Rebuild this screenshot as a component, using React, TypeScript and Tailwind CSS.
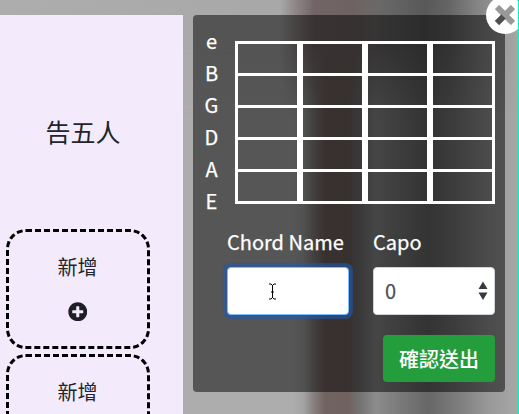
import { FaPlusCircle } from "react-icons/fa";

const STRINGS = ["e", "B", "G", "D", "A", "E"];
const FRETS = Array.from({ length: 20 }, (_, i) => i);

function AddCard() {
  return (
    <div className="flex h-[120px] w-36 shrink-0 flex-col items-center rounded-[20px] border-3 border-dashed border-black pt-5 pr-px">
      <span className="text-[20px] leading-[30px]">新增</span>
      <FaPlusCircle className="mt-[19.5px] size-[19.5px] text-[#1f1d26]" />
    </div>
  );
}

function Backdrop() {
  return (
    <div className="absolute inset-0 bg-[linear-gradient(to_right,#adadad_0,#adadad_292px,#a4a4a4_303px,#857f7e_314px,#71635f_325px,#6f625f_348px,#747373_360px,#8c8c8c_376px,#7a7a7a_400px,#676767_428px,#7c7c7c_457px,#999999_490px,#a8a8a8_519px)]">
      <div className="h-[115px] bg-[linear-gradient(to_right,#adadad_0,#a8a8a8_280px,#8a8282_298px,#736567_314px,#6e6262_350px,#6c6868_375px,#646464_395px,#585858_425px,#666666_450px,#828282_475px,#989898_500px,#a8a8a8_519px)] [mask-image:linear-gradient(black_40%,transparent)]" />
    </div>
  );
}

export default function App() {
  return (
    <div className="relative h-[414px] w-[519px] overflow-hidden font-['Noto_Sans_CJK_TC',sans-serif] text-[#212529]">
      <Backdrop />
      <div className="relative flex h-full items-start gap-2.5 pt-[15px]">
        <aside className="flex h-[399px] w-[183px] shrink-0 flex-col gap-[5px] overflow-hidden bg-[#f3ebfc] pl-1.5">
          <h2 className="h-[209px] shrink-0 pt-[97px] pl-[39.5px] text-[25px] leading-[38px]">告五人</h2>
          <AddCard />
          <AddCard />
        </aside>
        <section className="relative h-[377px] w-[312px] shrink-0 rounded bg-black/50 text-[20px] text-white">
          <button className="absolute -top-[19px] left-[293px] flex size-[38px] items-center justify-center rounded-full bg-white">
            <svg viewBox="0 0 20 20" className="size-5">
              <path d="M2 2 18 18M18 2 2 18" stroke="#999" strokeWidth="6" />
              <path d="M8.5 11.5 2 18" stroke="#505050" strokeWidth="6" />
            </svg>
          </button>
          <div className="flex pt-[11px]">
            <div className="-mt-px flex w-[42px] flex-col pl-[1px] text-center [-webkit-text-stroke:0.25px_white]">
              {STRINGS.map((name) => (
                <span key={name} className="h-8 pr-1.5 leading-8">{name}</span>
              ))}
            </div>
            <div className="mt-[15px] grid h-[163px] w-[260px] grid-cols-4 grid-rows-[repeat(5,32px)] border-b-3 border-white">
              {FRETS.map((i) => (
                <div key={i} className="border-x-3 border-t-3 border-white" />
              ))}
            </div>
          </div>
          <div className="mt-2.5 flex gap-6 pl-[34px]">
            <label className="w-[122px] leading-[30px]">
              <span className="[-webkit-text-stroke:0.25px_white]">Chord Name</span>
              <div className="mt-2.5 flex h-12 items-center rounded border border-[#80bdff] bg-white pl-10 shadow-[0_0_1px_3.5px_rgba(30,90,175,0.6)]">
                <svg viewBox="0 0 9 17" className="h-[17px] w-[9px]" fill="none" stroke="black">
                  <path d="M1 1h2l1.5 1.5L6 1h2M4.5 2v13M1 16h2l1.5-1.5L6 16h2M3 9h3" />
                </svg>
              </div>
            </label>
            <label className="w-[122px] leading-[30px]">
              <span className="[-webkit-text-stroke:0.25px_white]">Capo</span>
              <div className="mt-2.5 flex h-12 items-center justify-between rounded border border-[#ced4da] bg-white pr-1.5 pl-[11px] text-[#495057] [-webkit-text-stroke:0.25px_#495057]">
                0
                <svg viewBox="0 0 10 20" className="h-5 w-2.5" fill="#343a40">
                  <path d="M5 .5 9.5 8h-9zM.5 11.5h9L5 19z" />
                </svg>
              </div>
            </label>
          </div>
          <button className="mt-5 ml-[190px] flex h-[47px] w-28 items-center justify-center rounded bg-[#249d3d] font-medium">
            確認送出
          </button>
        </section>
      </div>
      <div className="absolute inset-y-0 right-0 w-px bg-[#00f5d0]" />
    </div>
  );
}
